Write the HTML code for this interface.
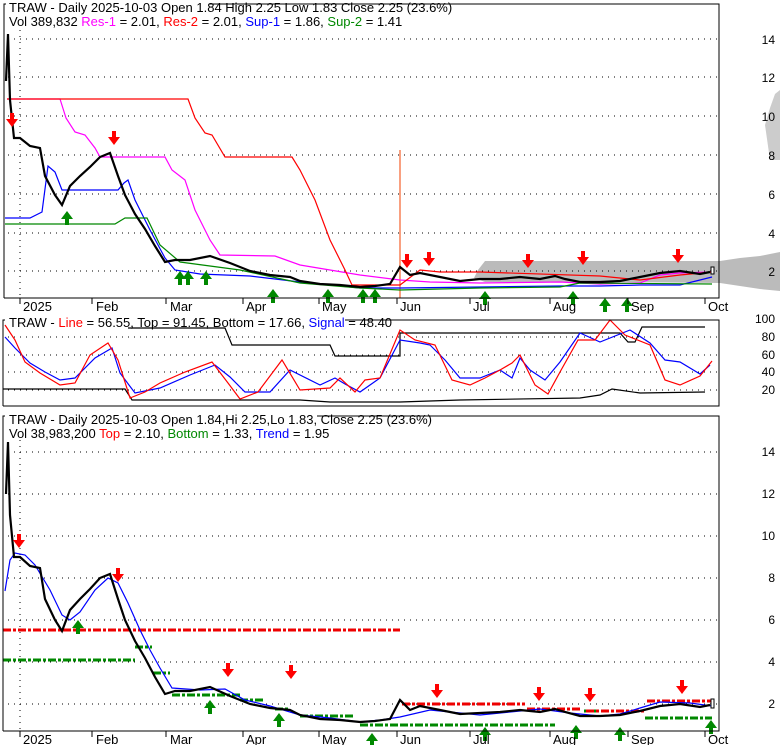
<!DOCTYPE html>
<html><head><meta charset="utf-8"><style>
body{margin:0;background:#fff;width:780px;height:745px;overflow:hidden}
svg{display:block;font-family:"Liberation Sans",sans-serif}
</style></head><body>
<svg width="780" height="745" viewBox="0 0 780 745">
<defs>
<g id="dn"><path d="M-2,-10h4v6h4l-6,8l-6,-8h4z" fill="#f00"/></g>
<g id="up"><path d="M-2,10h4v-6h4l-6,-8l-6,8h4z" fill="#080"/></g>
</defs>
<!-- PANEL 1 -->
<path d="M780,252 L760,256 740,258 720,261 485,261 478,270 474,278 485,282 600,282 720,283 740,286 760,289 780,291Z" fill="#bbb"/>
<path d="M765,125 770,108 775,94 780,90 780,160 770,160Z" fill="#ccc"/>
<rect x="399" y="150" width="2" height="148" fill="#f9a080"/>
<g stroke="#000" stroke-width="1" stroke-dasharray="1,5">
<line x1="8" y1="39" x2="719" y2="39"/><line x1="8" y1="77" x2="719" y2="77"/><line x1="8" y1="116" x2="719" y2="116"/><line x1="8" y1="155" x2="719" y2="155"/><line x1="8" y1="194" x2="719" y2="194"/><line x1="8" y1="233" x2="719" y2="233"/><line x1="8" y1="271" x2="719" y2="271"/>
<line x1="20" y1="30" x2="20" y2="298"/>
</g>
<polyline fill="none" stroke="#f0f" stroke-width="1.2" points="7,99 60,99 66,118 75,132 85,135 95,148 100,157 165,157 172,170 185,180 195,210 210,240 220,255 275,256 300,265 330,270 360,275 400,280 430,282 480,283 560,282 600,284 640,283 660,275 680,273 712,272"/>
<polyline fill="none" stroke="#f00" stroke-width="1.2" points="7,99 188,99 195,118 205,133 212,135 225,157 292,157 300,170 315,200 330,240 345,270 352,285 400,285 420,270 440,272 480,272 600,276 640,280 680,275 712,272"/>
<polyline fill="none" stroke="#00f" stroke-width="1.2" points="5,218 30,218 42,212 48,166 55,172 62,190 118,190 124,183 128,180 135,200 150,230 165,258 175,270 200,274 250,276 300,282 330,285 360,288 400,288 480,287 560,286 600,286 640,285 680,285 700,280 712,277"/>
<polyline fill="none" stroke="#080" stroke-width="1.2" points="5,224 115,224 125,218 147,218 160,245 180,262 240,270 300,283 360,288 400,290 480,288 560,287 580,283 712,284"/>
<polyline fill="none" stroke="#000" stroke-width="2.2" points="6,81 8,34 10,100 14,138 20,138 30,146 40,148 45,176 55,195 62,205 70,186 80,176 90,167 100,157 110,153 118,176 125,195 135,214 145,229 155,246 165,262 175,260 190,260 210,256 230,263 250,271 270,275 290,277 300,281 320,284 340,285 360,287 375,286 390,284 400,267 410,275 420,273 440,277 460,281 480,279 500,279 520,277 540,279 555,276 565,279 580,282 600,282 620,281 640,277 660,273 680,271 700,274 710,272"/>
<rect x="711" y="267" width="3" height="7" fill="#fff" stroke="#000"/>
<g>
<use href="#dn" x="12" y="123"/><use href="#dn" x="114" y="141"/><use href="#dn" x="407" y="264"/><use href="#dn" x="429" y="262"/><use href="#dn" x="528" y="264"/><use href="#dn" x="583" y="261"/><use href="#dn" x="678" y="259"/>
<use href="#up" x="67" y="215"/><use href="#up" x="180" y="275"/><use href="#up" x="188" y="275"/><use href="#up" x="206" y="275"/><use href="#up" x="273" y="293"/><use href="#up" x="328" y="293"/><use href="#up" x="363" y="293"/><use href="#up" x="375" y="293"/><use href="#up" x="485" y="295"/><use href="#up" x="573" y="295"/><use href="#up" x="605" y="302"/><use href="#up" x="627" y="302"/>
</g>
<path d="M4,298V4h2 M209,4H719V298H4" fill="none" stroke="#000"/>
<text x="9" y="12" font-size="13">TRAW - Daily 2025-10-03 Open 1.84  High 2.25  Low 1.83  Close 2.25 (23.6%)</text>
<text x="9" y="26" font-size="13">Vol 389,832 <tspan fill="#f0f">Res-1</tspan> = 2.01, <tspan fill="#f00">Res-2</tspan> = 2.01, <tspan fill="#00f">Sup-1</tspan> = 1.86, <tspan fill="#080">Sup-2</tspan> = 1.41</text>
<g font-size="12" text-anchor="end"><text x="775" y="44">14</text><text x="775" y="82">12</text><text x="775" y="121">10</text><text x="775" y="160">8</text><text x="775" y="199">6</text><text x="775" y="238">4</text><text x="775" y="276">2</text></g>
<g font-size="13"><text x="23" y="311">2025</text><text x="96" y="311">Feb</text><text x="170" y="311">Mar</text><text x="246" y="311">Apr</text><text x="322" y="311">May</text><text x="400" y="311">Jun</text><text x="473" y="311">Jul</text><text x="553" y="311">Aug</text><text x="631" y="311">Sep</text><text x="708" y="311">Oct</text></g>
<g stroke="#000"><line x1="20" y1="298" x2="20" y2="304"/><line x1="92" y1="298" x2="92" y2="304"/><line x1="166" y1="298" x2="166" y2="304"/><line x1="243" y1="298" x2="243" y2="304"/><line x1="319" y1="298" x2="319" y2="304"/><line x1="397" y1="298" x2="397" y2="304"/><line x1="470" y1="298" x2="470" y2="304"/><line x1="550" y1="298" x2="550" y2="304"/><line x1="628" y1="298" x2="628" y2="304"/><line x1="705" y1="298" x2="705" y2="304"/></g>

<!-- PANEL 2 -->
<g stroke="#000" stroke-dasharray="1,5"><line x1="8" y1="337" x2="719" y2="337"/><line x1="8" y1="355" x2="719" y2="355"/><line x1="8" y1="372" x2="719" y2="372"/><line x1="8" y1="390" x2="719" y2="390"/></g>
<polyline fill="none" stroke="#000" stroke-width="1.2" points="128,328 225,328 232,345 330,345 335,356 400,356 400,333 620,333 628,342 635,342 642,327 705,327"/>
<polyline fill="none" stroke="#000" stroke-width="1.2" points="3,389 125,389 132,400 225,400 300,400 330,402 400,402 460,400 580,398 600,395 612,389 640,393 705,392"/>
<polyline fill="none" stroke="#00f" stroke-width="1.2" points="5,337 15,348 30,363 45,372 60,380 75,378 95,358 112,348 120,373 135,393 160,388 190,375 215,365 230,377 245,392 270,392 290,370 320,385 335,378 345,384 360,392 380,378 400,340 420,343 430,345 445,360 460,378 480,378 500,370 512,378 520,358 530,370 545,380 560,362 580,333 600,342 630,330 650,343 665,360 680,362 700,374 710,365"/>
<polyline fill="none" stroke="#f00" stroke-width="1.2" points="5,325 15,340 25,362 40,373 60,385 75,383 90,355 108,343 118,360 130,398 145,392 160,383 185,372 212,362 228,383 240,399 258,392 282,360 300,390 330,388 340,378 355,392 365,380 380,378 400,330 415,340 435,345 452,380 470,385 485,378 500,370 512,363 520,355 535,385 548,394 560,372 578,340 595,340 610,320 625,335 650,345 665,380 680,385 700,376 712,361"/>
<path d="M3,406V320h2 M345,320H719V406H3" fill="none" stroke="#000"/>
<text x="9" y="327" font-size="13">TRAW - <tspan fill="#f00">Line</tspan> = 56.55, Top = 91.45, Bottom = 17.66, <tspan fill="#00f">Signal</tspan> = 48.40</text>
<g font-size="12" text-anchor="end"><text x="775" y="323">100</text><text x="775" y="341">80</text><text x="775" y="359">60</text><text x="775" y="376">40</text><text x="775" y="394">20</text></g>

<!-- PANEL 3 -->
<g stroke="#000" stroke-dasharray="1,5"><line x1="8" y1="452" x2="719" y2="452"/><line x1="8" y1="494" x2="719" y2="494"/><line x1="8" y1="536" x2="719" y2="536"/><line x1="8" y1="578" x2="719" y2="578"/><line x1="8" y1="620" x2="719" y2="620"/><line x1="8" y1="662" x2="719" y2="662"/><line x1="8" y1="704" x2="719" y2="704"/><line x1="20" y1="440" x2="20" y2="731"/></g>
<g stroke-width="3" stroke-dasharray="8,2,3,2" fill="none">
<line x1="3" y1="630" x2="400" y2="630" stroke="#e00"/>
<line x1="3" y1="660" x2="135" y2="660" stroke="#080"/>
<line x1="135" y1="647" x2="152" y2="647" stroke="#080"/>
<line x1="153" y1="673" x2="170" y2="673" stroke="#080"/>
<line x1="172" y1="695" x2="240" y2="695" stroke="#080"/>
<line x1="240" y1="700" x2="265" y2="700" stroke="#080"/>
<line x1="275" y1="709" x2="290" y2="709" stroke="#080"/>
<line x1="300" y1="716" x2="355" y2="716" stroke="#080"/>
<line x1="360" y1="725" x2="400" y2="725" stroke="#080"/>
<line x1="400" y1="725" x2="555" y2="725" stroke="#080"/>
<line x1="402" y1="704" x2="525" y2="704" stroke="#e00"/>
<line x1="527" y1="709" x2="582" y2="709" stroke="#e00"/>
<line x1="584" y1="711" x2="598" y2="711" stroke="#080"/>
<line x1="586" y1="711" x2="645" y2="711" stroke="#e00"/>
<line x1="645" y1="718" x2="712" y2="718" stroke="#080"/>
<line x1="647" y1="701" x2="712" y2="701" stroke="#e00"/>
</g>
<polyline fill="none" stroke="#00f" stroke-width="1.2" points="5,591 10,560 15,553 25,555 35,565 50,590 62,615 70,620 80,612 95,590 108,578 118,583 128,603 140,630 150,650 160,668 172,688 200,690 225,689 245,700 270,706 300,715 330,718 360,722 380,720 400,717 430,710 460,713 480,715 510,712 540,709 570,713 600,716 620,714 640,708 660,702 690,703 712,706"/>
<polyline fill="none" stroke="#000" stroke-width="2.2" points="6,494 8,442 10,515 14,557 20,557 30,566 40,568 45,599 55,620 62,631 70,610 80,599 90,589 100,578 110,574 118,599 125,620 135,641 145,658 155,677 165,694 175,691 190,691 210,687 230,696 250,704 270,708 290,710 300,715 320,719 340,720 360,722 375,721 390,719 400,700 410,710 420,706 440,710 460,714 480,713 500,712 520,710 540,712 555,709 565,712 580,716 600,716 620,715 640,711 660,706 680,704 700,707 710,705"/>
<rect x="711" y="699" width="3" height="9" fill="#fff" stroke="#000"/>
<g>
<use href="#dn" x="19" y="544"/><use href="#dn" x="118" y="578"/><use href="#dn" x="228" y="673"/><use href="#dn" x="291" y="675"/><use href="#dn" x="437" y="694"/><use href="#dn" x="539" y="697"/><use href="#dn" x="590" y="698"/><use href="#dn" x="682" y="690"/>
<use href="#up" x="78" y="624"/><use href="#up" x="210" y="704"/><use href="#up" x="279" y="717"/><use href="#up" x="372" y="737"/><use href="#up" x="485" y="731"/><use href="#up" x="576" y="729"/><use href="#up" x="620" y="731"/><use href="#up" x="711" y="724"/>
</g>
<path d="M3,731V416h2 M317,416H719V731H3" fill="none" stroke="#000"/>
<text x="9" y="424" font-size="13">TRAW - Daily 2025-10-03 Open 1.84,Hi 2.25,Lo 1.83, Close 2.25 (23.6%)</text>
<text x="9" y="438" font-size="13">Vol 38,983,200 <tspan fill="#f00">Top</tspan> = 2.10, <tspan fill="#080">Bottom</tspan> = 1.33, <tspan fill="#00f">Trend</tspan> = 1.95</text>
<g font-size="12" text-anchor="end"><text x="775" y="456">14</text><text x="775" y="498">12</text><text x="775" y="540">10</text><text x="775" y="582">8</text><text x="775" y="624">6</text><text x="775" y="666">4</text><text x="775" y="708">2</text></g>
<g font-size="13"><text x="23" y="744">2025</text><text x="96" y="744">Feb</text><text x="170" y="744">Mar</text><text x="246" y="744">Apr</text><text x="322" y="744">May</text><text x="400" y="744">Jun</text><text x="473" y="744">Jul</text><text x="553" y="744">Aug</text><text x="631" y="744">Sep</text><text x="708" y="744">Oct</text></g>
<g stroke="#000"><line x1="20" y1="731" x2="20" y2="737"/><line x1="92" y1="731" x2="92" y2="737"/><line x1="166" y1="731" x2="166" y2="737"/><line x1="243" y1="731" x2="243" y2="737"/><line x1="319" y1="731" x2="319" y2="737"/><line x1="397" y1="731" x2="397" y2="737"/><line x1="470" y1="731" x2="470" y2="737"/><line x1="550" y1="731" x2="550" y2="737"/><line x1="628" y1="731" x2="628" y2="737"/><line x1="705" y1="731" x2="705" y2="737"/></g>
</svg>
</body></html>
